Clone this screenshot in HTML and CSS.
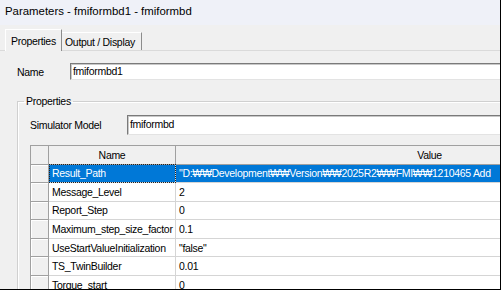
FILE: index.html
```html
<!DOCTYPE html>
<html lang="en">
<head>
  <meta charset="UTF-8" />
  <title>Parameters - fmiformbd1 - fmiformbd</title>
  <link rel="stylesheet" href="styles.css">
</head>
<body>

  <div class="window">
    <div class="titlebar">Parameters - fmiformbd1 - fmiformbd</div>

    <!-- Tab strip -->
    <div class="tabs">
      <div class="tab active">Properties</div>
      <div class="tab">Output / Display</div>
    </div>

    <div class="tabpage">
      <div class="field name-field">
        <span class="label">Name</span>
        <div class="textbox">fmiformbd1</div>
      </div>

      <fieldset class="group">
        <legend>Properties</legend>

        <div class="field sim-field">
          <span class="label">Simulator Model</span>
          <div class="textbox">fmiformbd</div>
        </div>

        <table class="grid">
          <colgroup>
            <col class="col-head">
            <col class="col-name">
            <col class="col-value">
          </colgroup>
          <thead>
            <tr>
              <th class="corner"></th>
              <th>Name</th>
              <th>Value</th>
            </tr>
          </thead>
          <tbody>
            <tr class="selected">
              <td class="row-head"></td>
              <td class="focus">Result_Path</td>
              <td>"D:₩₩Development₩₩Version₩₩2025R2₩₩FMI₩₩1210465 Add</td>
            </tr>
            <tr>
              <td class="row-head"></td>
              <td>Message_Level</td>
              <td>2</td>
            </tr>
            <tr>
              <td class="row-head"></td>
              <td>Report_Step</td>
              <td>0</td>
            </tr>
            <tr>
              <td class="row-head"></td>
              <td>Maximum_step_size_factor</td>
              <td>0.1</td>
            </tr>
            <tr>
              <td class="row-head"></td>
              <td>UseStartValueInitialization</td>
              <td>"false"</td>
            </tr>
            <tr>
              <td class="row-head"></td>
              <td>TS_TwinBuilder</td>
              <td>0.01</td>
            </tr>
            <tr>
              <td class="row-head"></td>
              <td>Torque_start</td>
              <td>0</td>
            </tr>
          </tbody>
        </table>
      </fieldset>
    </div>
  </div>

</body>
</html>
```

FILE: styles.css
```css
:root {
  --face: #f0f0f0;
  --title: #eff1f8;
  --shadow: #a0a0a0;
  --line: #d5d5d5;
  --select: #0078d7;
  --font: "Liberation Sans", Arial, sans-serif;
}
* {
  margin: 0; padding: 0; box-sizing: border-box;
}
body {
  background: #fff; color: #000;
  font-family: var(--font); font-size: 10.5px; letter-spacing: -0.3px;
}

.window {
  width: 501px; height: 290px; overflow: hidden;
  display: flex; flex-direction: column;
  background: var(--face);
  border-right: 1px solid #000; border-bottom: 1px solid #000;
}

.titlebar {
  flex: none; height: 25px; padding-left: 5px;
  background: var(--title);
  font-size: 11.4px; letter-spacing: 0; line-height: 23px; white-space: nowrap;
}

/* tabs */
.tabs {
  flex: none; height: 25px; padding: 4px 0 0 5px;
  display: flex; align-items: flex-end;
}
.tab {
  height: 18px; padding: 3px 0 0 3px; width: 80px;
  border-top: 1px solid #fff; border-right: 1px solid #8c8c8c;
  white-space: nowrap;
}
.tab.active {
  position: relative; z-index: 1;
  width: 57px; height: 22px; margin-bottom: -1px; padding: 5px 0 0 5px;
  background: var(--face);
  border-left: 1px solid #fff;
}

.tabpage {
  flex: 1; min-width: 0;
  border-top: 1px solid #dadada;
  padding: 12px 0 0 17px;
}

.field {
  display: flex; align-items: center; white-space: nowrap;
}
.field .label { flex: none; }
.textbox {
  flex: none; width: 700px; background: #fff;
  border: 1px solid; border-color: #7a7a7a #f0f0f0 #e3e3e3 #7a7a7a;
  box-shadow: inset 1px 1px 0 #c8c8c8;
  padding-left: 2px;
}
.name-field .label { width: 53px; }
.name-field .textbox { height: 17px; line-height: 14px; }

/* group box */
.group {
  width: 700px; margin-top: 15px;
  border: 1px solid #d0d0d0;
  box-shadow: inset 1px 1px 0 #fff;
  padding: 8px 0 20px 12px;
}
.group legend {
  margin-left: -6px; padding: 0 2px;
  line-height: 12px;
}
.sim-field .label { width: 97px; }
.sim-field .textbox { height: 20px; line-height: 17px; }

/* property grid */
.grid {
  margin-top: 10px; width: 653px;
  table-layout: fixed; border-collapse: collapse;
  border: 1px solid var(--shadow);
  white-space: nowrap;
}
.col-head { width: 18px; }
.col-name { width: 127px; }
.col-value { width: 508px; }

.grid th {
  height: 18.5px; font-weight: normal; text-align: center;
  background: var(--face);
  border: 1px solid var(--shadow);
}
.grid tbody tr { height: 18.6px; }
.grid td {
  padding-left: 3px; overflow: hidden;
  background: #fff;
  border: 1px solid var(--line);
}
.grid td.row-head {
  background: var(--face);
  border: 1px solid var(--shadow);
  box-shadow: inset 1px 1px 0 #fff;
}
.grid .selected td:not(.row-head) {
  background: var(--select); color: #fff;
}
.grid td.focus {
  outline: 1px dotted #222; outline-offset: -1px;
}
```
